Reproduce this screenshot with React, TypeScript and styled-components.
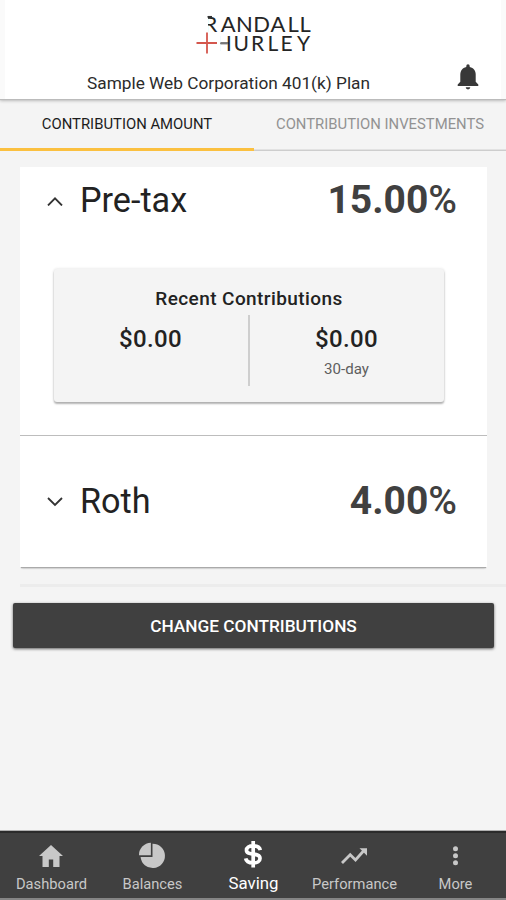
import React from "react";
import styled, { createGlobalStyle } from "styled-components";

const GlobalStyle = createGlobalStyle`
  *, *::before, *::after { box-sizing: border-box; }
  body {
    margin: 0;
    background: #f4f4f4;
    font-family: Roboto, "Liberation Sans", sans-serif;
    color: #222;
  }
`;

const Screen = styled.div`
  display: flex;
  flex-direction: column;
  height: 900px;
  overflow: hidden;
  background: #f4f4f4;
`;

const Header = styled.header`
  display: flex;
  flex-direction: column;
  height: 99px;
  flex: none;
  padding-top: 10px;
  background: #fff;
  border: solid #fafafa;
  border-width: 0 5px;
  box-shadow: 0 1px 1px #bbb, 0 2px 3px rgba(0, 0, 0, 0.22);
  z-index: 1;
`;

const Logo = styled.svg`
  display: block;
  flex: none;
  width: 130px;
  height: 48px;
  margin-left: 185px;
  font-family: Lato, "Open Sans", sans-serif;
`;

const PlanBar = styled.div`
  display: grid;
  grid-template-columns: 445px 36px;
  align-items: center;
  height: 38px;
`;

const PlanName = styled.h1`
  margin: 12px 0 0 82px;
  font-size: 17.25px;
  font-weight: 400;
  line-height: 20px;
  white-space: nowrap;
  color: #2b2b2b;
`;

const BellButton = styled.button`
  display: grid;
  place-items: center;
  width: 36px;
  height: 36px;
  padding: 0;
  border: 0;
  background: none;
  color: #383838;
`;

const Tabs = styled.nav`
  display: grid;
  grid-template-columns: 254px 252px;
  height: 52px;
  flex: none;
`;

const Tab = styled.button<{ $active?: boolean }>`
  display: flex;
  align-items: flex-start;
  justify-content: center;
  padding: 2px 0 0;
  border: 0;
  border-bottom: ${(p) => (p.$active ? "3px solid #fbc040" : "1px solid #cdcdcd")};
  box-shadow: ${(p) => (p.$active ? "none" : "inset 0 -1px 0 #e2e2e2")};
  background: none;
  font: 400 14.85px/46px Roboto, sans-serif;
  color: ${(p) => (p.$active ? "#1c1c1c" : "#929292")};
  white-space: nowrap;
`;

const Sources = styled.main`
  display: flex;
  flex-direction: column;
  flex: none;
  width: 467px;
  margin: 16px 0 0 20px;
  background: #fff;
  box-shadow: 0 2px 1px -1px #aaa, 0 3px 2px -2px rgba(0, 0, 0, 0.3);
`;

const Source = styled.section<{ $height: number; $divided?: boolean }>`
  height: ${(p) => p.$height}px;
  border-bottom: ${(p) => (p.$divided ? "1px solid #bdbdbd" : "0")};
`;

const SourceRow = styled.div<{ $top: number }>`
  display: flex;
  align-items: center;
  height: 46px;
  margin-top: ${(p) => p.$top}px;
  padding: 0 30px 0 26px;
`;

const SourceName = styled.h2`
  margin: 0 0 0 16px;
  flex: 1;
  font-size: 34.2px;
  font-weight: 400;
  line-height: 46px;
  color: #222;
`;

const Percent = styled.strong`
  font-size: 39px;
  font-weight: 700;
  line-height: 46px;
  color: #404040;
`;

const PercentSign = styled.span`
  font-weight: 500;
`;

const RecentCard = styled.div`
  width: 390px;
  height: 133px;
  margin: 46px 0 0 34px;
  padding-top: 18px;
  border-radius: 3px;
  background: #f4f4f4;
  box-shadow: 0 2px 2px rgba(0, 0, 0, 0.28), 0 0 3px rgba(0, 0, 0, 0.14);
`;

const RecentTitle = styled.h3`
  margin: 0;
  font-size: 19px;
  font-weight: 500;
  line-height: 24px;
  letter-spacing: 0.42px;
  text-align: center;
  color: #222;
`;

const Amounts = styled.div`
  display: grid;
  grid-template-columns: 196px 194px;
  height: 71px;
  margin-top: 4px;
`;

const Amount = styled.div<{ $ruled?: boolean }>`
  padding-top: 9px;
  padding-right: 1px;
  text-align: center;
  border-right: ${(p) => (p.$ruled ? "2px solid #cecece" : "0")};
`;

const Money = styled.div`
  font-size: 24px;
  font-weight: 500;
  line-height: 30px;
  letter-spacing: 0.4px;
  color: #222;
`;

const Period = styled.div`
  margin-top: 5px;
  font-size: 15.1px;
  line-height: 20px;
  color: #5e5e5e;
`;

const Rule = styled.hr`
  flex: none;
  width: 486px;
  height: 3px;
  margin: 17px 0 0 20px;
  border: 0;
  background: #ececec;
`;

const ChangeButton = styled.button`
  flex: none;
  width: 481px;
  height: 45px;
  margin: 16px 0 0 13px;
  padding: 1px 0 0;
  border: 0;
  border-radius: 2px;
  background: #404040;
  color: #fff;
  font: 500 17.25px/24px Roboto, sans-serif;
  box-shadow: 0 1px 3px rgba(0, 0, 0, 0.6);
`;

const BottomNav = styled.nav`
  display: grid;
  grid-template-columns: repeat(5, 1fr);
  flex: none;
  height: 69px;
  margin-top: auto;
  padding-left: 1px;
  border-top: 2px solid #2b2b2b;
  border-bottom: 2px solid #858585;
  background: #404040;
  box-shadow: 0 -1px 0 #b0b0b0;
`;

const NavItem = styled.a<{ $active?: boolean }>`
  display: flex;
  flex-direction: column;
  align-items: center;
  padding-top: 7px;
  color: ${(p) => (p.$active ? "#fff" : "#c8c8c8")};
  font-size: ${(p) => (p.$active ? "16.8px" : "14.7px")};
  line-height: 20px;

  svg {
    flex: none;
    height: 32px;
    margin: 0 1px ${(p) => (p.$active ? "1px" : "2px")} 0;
  }
`;

const Chevron = ({ open }: { open?: boolean }) => (
  <svg width="18" height="12" viewBox="0 0 18 12" fill="none" stroke="#333" strokeWidth="1.8">
    <path d={open ? "M2 11.500 L9 4.300 L16 11.500" : "M2 3 L9 10 L16 3"} />
  </svg>
);

const BrandLogo = () => (
  <Logo viewBox="190 10 130 48" role="img" aria-label="Randall + Hurley">
    <text x="203.400 220.700 236 253.300 270.600 287.600 299.600" y="32" fontSize="22" fill="#252525">RANDALL</text>
    <text x="215.800 233.600 251 267.500 280.500 296.900" y="51.300" fontSize="21" fill="#252525">HURLEY</text>
    <rect x="202" y="14" width="6" height="19" fill="#fff" />
    <rect x="214" y="35" width="6.500" height="18" fill="#fff" />
    <path d="M207.500 16.800H212" stroke="#333" strokeWidth="1.700" />
    <path d="M220.500 43.500H228" stroke="#777" strokeWidth="1.800" />
    <path d="M196.500 43H217M207 32.500V53.500" stroke="#d4574d" strokeWidth="1.8" />
  </Logo>
);

const navItems = [
  {
    label: "Dashboard",
    icon: (
      <svg width="26" viewBox="0 0 26 32" fill="currentColor">
        <path d="M13 5L25 16h-3.500v11h-6.300v-7.500h-4.400V27H4.500V16H1z" />
      </svg>
    ),
  },
  {
    label: "Balances",
    icon: (
      <svg width="28" viewBox="0 0 28 32" fill="currentColor">
        <path d="M12.900 2.700V15.300H1A12.200 12.200 0 0 1 12.900 2.700z" />
        <path d="M14.500 3.700V17H2.600A12.200 12.200 0 1 0 14.500 3.700z" />
      </svg>
    ),
  },
  {
    label: "Saving",
    active: true,
    icon: (
      <svg width="22" viewBox="0 0 22 32" fill="none" stroke="currentColor" strokeWidth="3.700">
        <path d="M18.300 10.200C17.600 7.100 14.900 5.900 11.200 5.900C7.100 5.900 4.500 7.600 4.500 10.200C4.500 16.200 18 11.900 18 18.400C18 21.300 15.200 23 11.200 23C7 23 4.200 21.400 3.700 18.400M11.200 1V27.500" />
      </svg>
    ),
  },
  {
    label: "Performance",
    icon: (
      <svg width="28" viewBox="0 0 28 32">
        <path d="M2 23L10.200 14.800L15.500 20L23.500 11" fill="none" stroke="currentColor" strokeWidth="2.800" />
        <path d="M19.500 8.200H27V15.700z" fill="currentColor" />
      </svg>
    ),
  },
  {
    label: "More",
    icon: (
      <svg width="8" viewBox="0 0 8 32" fill="currentColor">
        <circle cx="4.500" cy="8.700" r="2.500" />
        <circle cx="4.500" cy="15.700" r="2.500" />
        <circle cx="4.500" cy="22.700" r="2.500" />
      </svg>
    ),
  },
];

export default function App() {
  return (
    <>
      <GlobalStyle />
      <Screen>
        <Header>
          <BrandLogo />
          <PlanBar>
            <PlanName>Sample Web Corporation 401(k) Plan</PlanName>
            <BellButton aria-label="Notifications">
              <svg width="22" height="26" viewBox="0 0 22 26" fill="currentColor">
                <path d="M9.300 3V2a1.700 1.700 0 0 1 3.400 0v1c4 .9 6 4 6 7.500v7.300l2.600 2.700V22H.7v-1.500l2.600-2.700v-7.300C3.300 7 5.300 3.900 9.300 3z" />
                <path d="M8.700 23.300h4.600a2.300 2.100 0 0 1-4.600 0z" />
              </svg>
            </BellButton>
          </PlanBar>
        </Header>
        <Tabs>
          <Tab $active>CONTRIBUTION AMOUNT</Tab>
          <Tab>CONTRIBUTION INVESTMENTS</Tab>
        </Tabs>
        <Sources>
          <Source $height={269} $divided>
            <SourceRow $top={10}>
              <Chevron open />
              <SourceName>Pre-tax</SourceName>
              <Percent>15.00<PercentSign>%</PercentSign></Percent>
            </SourceRow>
            <RecentCard>
              <RecentTitle>Recent Contributions</RecentTitle>
              <Amounts>
                <Amount $ruled><Money>$0.00</Money></Amount>
                <Amount>
                  <Money>$0.00</Money>
                  <Period>30-day</Period>
                </Amount>
              </Amounts>
            </RecentCard>
          </Source>
          <Source $height={131}>
            <SourceRow $top={42}>
              <Chevron />
              <SourceName>Roth</SourceName>
              <Percent>4.00<PercentSign>%</PercentSign></Percent>
            </SourceRow>
          </Source>
        </Sources>
        <Rule />
        <ChangeButton>CHANGE CONTRIBUTIONS</ChangeButton>
        <BottomNav>
          {navItems.map((item) => (
            <NavItem key={item.label} $active={item.active}>
              {item.icon}
              {item.label}
            </NavItem>
          ))}
        </BottomNav>
      </Screen>
    </>
  );
}
